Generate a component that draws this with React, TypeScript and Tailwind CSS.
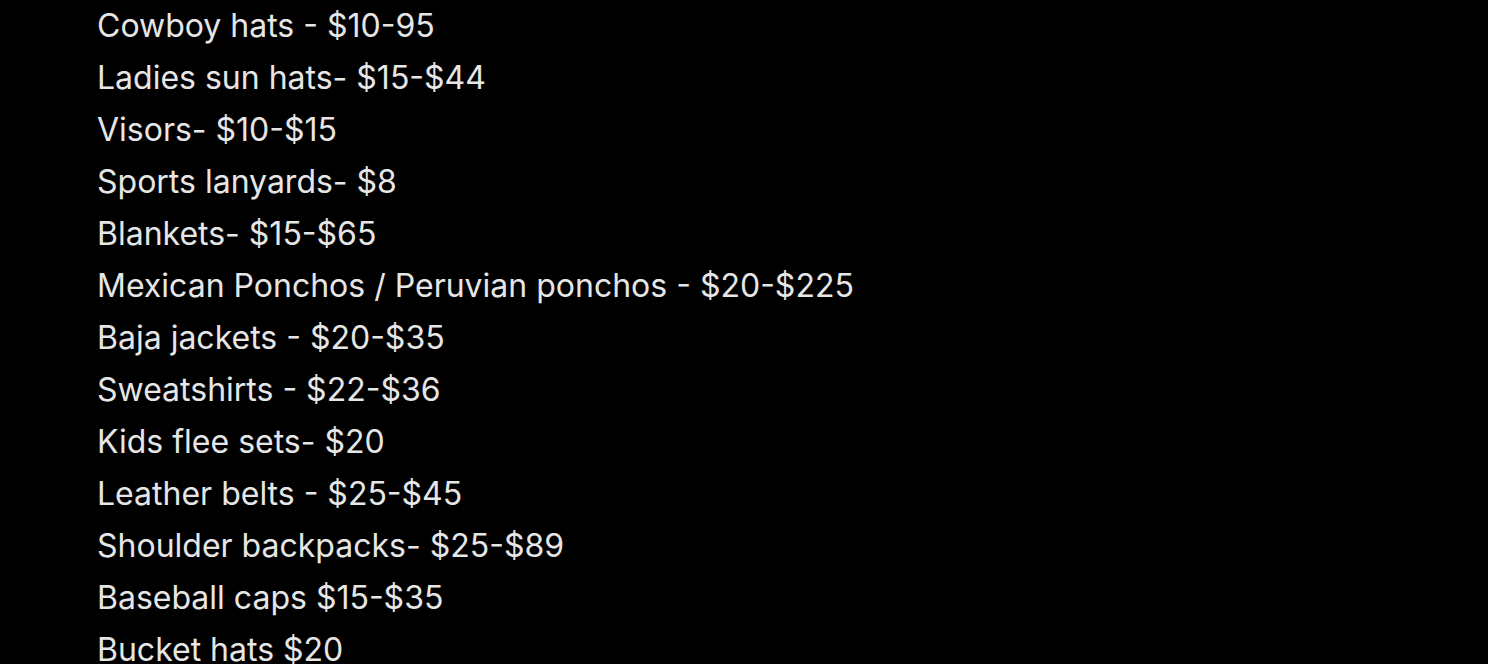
const items = [
  "Cowboy hats - $10-95",
  "Ladies sun hats- $15-$44",
  "Visors- $10-$15",
  "Sports lanyards- $8",
  "Blankets- $15-$65",
  "Mexican Ponchos / Peruvian ponchos - $20-$225",
  "Baja jackets - $20-$35",
  "Sweatshirts - $22-$36",
  "Kids flee sets- $20",
  "Leather belts - $25-$45",
  "Shoulder backpacks- $25-$89",
  "Baseball caps $15-$35",
  "Bucket hats $20",
];

export default function App() {
  return (
    <div className="h-[664px] w-full overflow-hidden bg-black pl-[97px] font-['Inter',sans-serif] text-[32px] leading-[52px] text-[#e6e6e6]">
      {items.map((item) => (
        <div key={item} className="whitespace-pre">
          {item}
        </div>
      ))}
    </div>
  );
}
